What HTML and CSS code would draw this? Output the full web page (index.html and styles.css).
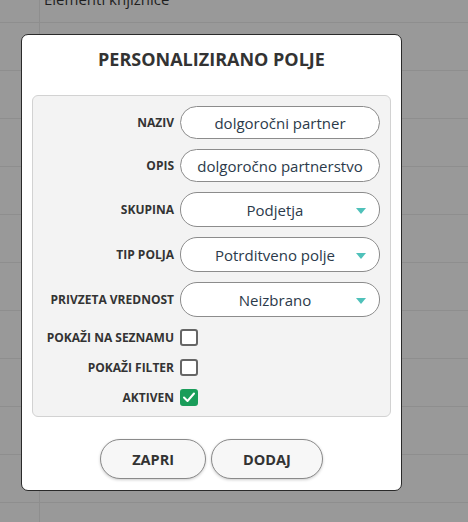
FILE: index.html
```html
<!DOCTYPE html>
<html lang="sl">
<head>
<meta charset="utf-8">
<title>Personalizirano polje</title>
<link rel="stylesheet" href="styles.css">
</head>
<body>
<div class="table">
  <div class="row"><div class="cell-a"></div><div class="cell-b">Elementi knjižnice</div></div>
  <div class="row"><div class="cell-a"></div><div class="cell-b"></div></div>
  <div class="row"><div class="cell-a"></div><div class="cell-b"></div></div>
  <div class="row"><div class="cell-a"></div><div class="cell-b"></div></div>
  <div class="row"><div class="cell-a"></div><div class="cell-b"></div></div>
  <div class="row"><div class="cell-a"></div><div class="cell-b"></div></div>
  <div class="row"><div class="cell-a"></div><div class="cell-b"></div></div>
  <div class="row"><div class="cell-a"></div><div class="cell-b"></div></div>
  <div class="row"><div class="cell-a"></div><div class="cell-b"></div></div>
  <div class="row"><div class="cell-a"></div><div class="cell-b"></div></div>
  <div class="row"><div class="cell-a"></div><div class="cell-b"></div></div>
  <div class="row"><div class="cell-a"></div><div class="cell-b">Produkti</div></div>
</div>

<div class="modal">
  <h1 class="title">PERSONALIZIRANO POLJE</h1>
  <div class="panel">
    <div class="label">NAZIV</div>
    <div class="field input">dolgoročni partner</div>

    <div class="label">OPIS</div>
    <div class="field input">dolgoročno partnerstvo</div>

    <div class="label">SKUPINA</div>
    <div class="field select"><span>Podjetja</span><i class="arrow"></i></div>

    <div class="label">TIP POLJA</div>
    <div class="field select"><span>Potrditveno polje</span><i class="arrow"></i></div>

    <div class="label">PRIVZETA VREDNOST</div>
    <div class="field select"><span>Neizbrano</span><i class="arrow"></i></div>

    <div class="label">POKAŽI NA SEZNAMU</div>
    <div class="check-cell"><span class="box"></span></div>

    <div class="label">POKAŽI FILTER</div>
    <div class="check-cell"><span class="box"></span></div>

    <div class="label">AKTIVEN</div>
    <div class="check-cell"><span class="box checked"><svg viewBox="0 0 18 18" width="18" height="18"><path d="M4 9.5 L7.5 13 L14 5.5" fill="none" stroke="#fff" stroke-width="2" stroke-linecap="round" stroke-linejoin="round"/></svg></span></div>
  </div>
  <div class="actions">
    <button class="btn">ZAPRI</button>
    <button class="btn">DODAJ</button>
  </div>
</div>
</body>
</html>
```

FILE: styles.css
```css
* { box-sizing: border-box; }

html, body {
  margin: 0;
  padding: 0;
  height: 100%;
  overflow: hidden;
}

body {
  background: #999999;
  font-family: "Open Sans", "Noto Sans", sans-serif;
  color: #333;
  position: relative;
}

.table {
  display: flex;
  flex-direction: column;
  margin-top: -25px;
}

.row {
  display: flex;
  height: 48px;
  border-bottom: 1px solid #8e8e8e;
  flex-shrink: 0;
}

.cell-a {
  width: 40px;
  border-right: 1px solid #8e8e8e;
}

.cell-b {
  flex: 1;
  display: flex;
  align-items: center;
  padding-left: 4px;
  font-size: 15px;
  color: #1f1f1f;
}

.modal {
  position: absolute;
  left: 21px;
  top: 34px;
  width: 381px;
  height: 457px;
  background: #fff;
  border: 1px solid #2a2a2a;
  border-radius: 7px;
  padding: 11px 10px 10px;
  display: flex;
  flex-direction: column;
}

.title {
  margin: 0;
  text-align: center;
  font-size: 18px;
  font-weight: 700;
  line-height: 27px;
  color: #333;
}

.panel {
  margin-top: 22px;
  background: #f3f3f3;
  border: 1px solid #d2d2d2;
  border-radius: 6px;
  padding: 10px 10px 9px 8px;
  display: grid;
  grid-template-columns: 132px 200px;
  column-gap: 6px;
  row-gap: 10px;
  justify-content: end;
  align-items: center;
}

.label {
  text-align: right;
  font-size: 12px;
  font-weight: 700;
  color: #333;
  white-space: nowrap;
}

.field {
  background: #fff;
  border: 1px solid #8c8c8c;
  border-radius: 17px;
  font-size: 15px;
  color: #2b3a4a;
  display: flex;
  align-items: center;
  justify-content: center;
  white-space: nowrap;
}

.input { height: 33px; }

.select {
  height: 35px;
  position: relative;
  padding-right: 10px;
}

.arrow {
  position: absolute;
  right: 13px;
  top: 15px;
  width: 0;
  height: 0;
  border-left: 5px solid transparent;
  border-right: 5px solid transparent;
  border-top: 6px solid #4fc1ba;
}

.check-cell {
  height: 20px;
  display: flex;
  align-items: center;
}

.box {
  width: 18px;
  height: 17px;
  border: 2px solid #666;
  border-radius: 3px;
  background: #fff;
  display: flex;
  align-items: center;
  justify-content: center;
}

.box.checked {
  background: #1a9d5a;
  border-color: #1a9d5a;
}

.box svg { flex-shrink: 0; }

.actions {
  margin-top: 22px;
  display: flex;
  justify-content: center;
  gap: 5px;
}

.btn {
  height: 40px;
  padding: 0 31px;
  border: 1px solid #8a8a8a;
  border-radius: 20px;
  background: #f7f7f7;
  font-family: "Open Sans", "Noto Sans", sans-serif;
  font-size: 14.5px;
  font-weight: 700;
  color: #333;
  box-shadow: 0 1px 3px rgba(0,0,0,0.2);
}
```
